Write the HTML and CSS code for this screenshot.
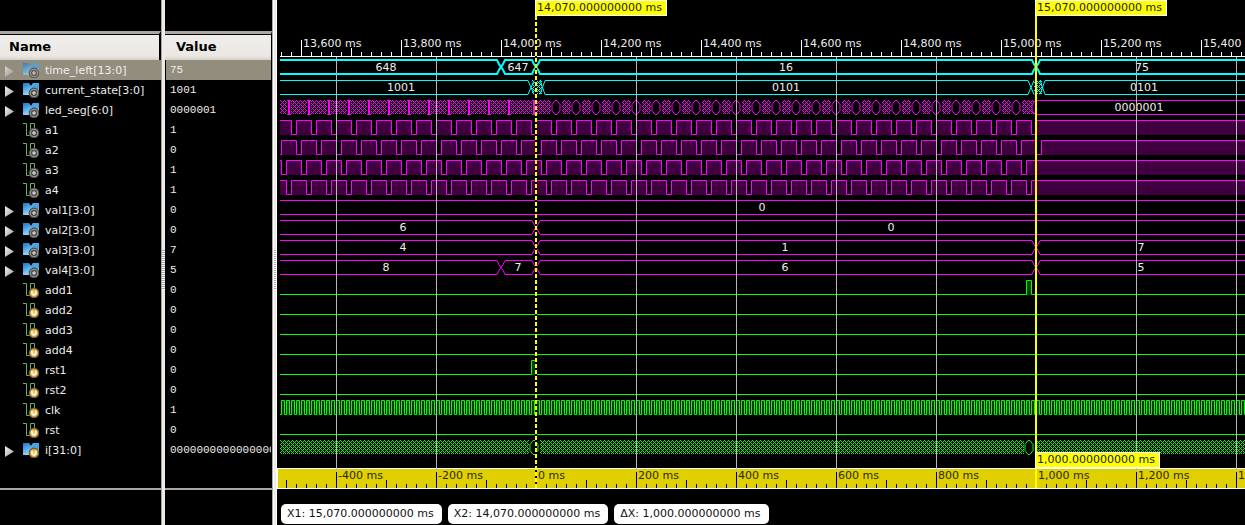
FILE: index.html
```html
<!DOCTYPE html>
<html lang="en">
<head>
<meta charset="utf-8">
<title>Waveform viewer</title>
<link rel="stylesheet" href="styles.css">
</head>
<body>
<svg class="defs" width="0" height="0" aria-hidden="true">
  <defs>
    <linearGradient id="blue" x1="0" y1="0" x2=".6" y2="1">
      <stop offset="0" stop-color="#1d76bd"/><stop offset=".5" stop-color="#5bb2ee"/><stop offset="1" stop-color="#c4e4f8"/>
    </linearGradient>
    <linearGradient id="arrow" x1="0" y1="0" x2="1" y2="1">
      <stop offset="0" stop-color="#f4f2f0"/><stop offset="1" stop-color="#a09c98"/>
    </linearGradient>
    <radialGradient id="gold"><stop offset="0" stop-color="#f6d77a"/><stop offset="1" stop-color="#d9991a"/></radialGradient>
    <symbol id="probe" viewBox="0 0 16 16">
      <circle cx="11" cy="11" r="5.4" fill="#4a4845"/>
      <circle cx="11" cy="11" r="3.8" fill="#4c4c4c" stroke="#a19e9a"/>
      <path d="M11 9v4M9 11h4" stroke="#eee"/>
    </symbol>
    <symbol id="unit" viewBox="0 0 16 16">
      <circle cx="11" cy="11" r="5.4" fill="#5d5748"/>
      <circle cx="11" cy="11" r="4.3" fill="url(#gold)"/>
      <path d="M9 8.500v2.500a2 2 0 0 0 4 0v-2.500" fill="none" stroke="#fff" stroke-width="1.400"/>
    </symbol>
    <symbol id="bus" viewBox="0 0 16 16">
      <path d="M0 1h6l2 3 2-3h6v12H10l-2-2-2 2H0z" fill="url(#blue)"/>
      <path d="M10 1h6v6l-6 1-2-4z" fill="#4ba3e3"/>
    </symbol>
    <symbol id="bit" viewBox="0 0 16 16">
      <path d="M0 1.500h3.500v12h4v-12h4v7" fill="none" stroke="#6fae5c"/>
    </symbol>
  </defs>
</svg>
<main class="viewer">
  <section class="pane names">
    <h2 class="head">Name</h2>
    <ul class="rows" id="names"></ul>
  </section>
  <div class="splitter narrow" role="separator"></div>
  <section class="pane values">
    <h2 class="head">Value</h2>
    <ul class="rows" id="values"></ul>
  </section>
  <div class="splitter wide" role="separator"></div>
  <section class="waves">
    <svg class="plot" id="plot" role="img" aria-label="Signal waveforms"></svg>
    <footer class="readouts">
      <span class="chip">X1: 15,070.000000000 ms</span>
      <span class="chip">X2: 14,070.000000000 ms</span>
      <span class="chip">ΔX: 1,000.000000000 ms</span>
    </footer>
  </section>
</main>
<script src="waves.js"></script>
</body>
</html>
```

FILE: styles.css
```css
* { box-sizing: border-box; }
body {
  margin: 0;
  background: #000;
  color: #eee;
  font-family: "DejaVu Sans", sans-serif;
  font-size: 11px;
}
.defs { position: absolute; }
.viewer { display: flex; min-height: 100vh; overflow: hidden; }
.pane { flex: none; padding-top: 31px; overflow: hidden; }
.names { width: 161px; }
.values { width: 107px; }
.head {
  margin: 0;
  height: 29px;
  padding: 2px 9px 0;
  border-top: 3px solid #aca6a3;
  background: linear-gradient(#f0eeeb, #ebe8e4 85%, #d5d1c9);
  box-shadow: inset 0 1px #000;
  color: #000;
  font-size: 13px;
  line-height: 22px;
  border-right: 2px solid #000;
}
.values .head { padding-left: 11px; border-right-width: 1px; }
.rows {
  list-style: none;
  margin: 0;
  padding: 0;
  height: 430px;
  border-bottom: 2px solid #aca6a3;
}
.row { display: flex; align-items: center; height: 20px; line-height: 20px; white-space: nowrap; }
.selected { background: #928d7d; }
.names .row { padding-left: 5px; }
.name { padding-top: 1px; }
.toggle { width: 18px; height: 20px; flex: none; padding: 0; border: 0; background: none; }
.toggle svg { display: block; width: 10px; height: 20px; }
.icon { width: 16px; height: 16px; margin-right: 6px; flex: none; }
.selected .icon, .selected .toggle { opacity: .7; }
.values .rows { padding: 0 1px; }
.values .row { padding: 0 0 0 4px; overflow: hidden; font-family: "Liberation Mono", monospace; }
.splitter {
  flex: none;
  background:
    repeating-linear-gradient(#aca6a3 0 1px, #fff 1px 2px) center 250px / 3px 40px no-repeat,
    #edeae7;
  border-left: 1px solid #aca6a3;
}
.narrow { width: 4px; }
.wide { width: 5px; box-shadow: inset 1px 0 #fff; border-right: 1px solid #fff; }
.waves { flex: 1; min-width: 0; }
.plot { display: block; width: 100%; height: 490px; overflow: hidden; }
.plot text { font-size: 11px; fill: #eee; }
.plot .gold-text { fill: #2b2700; }
.plot .flag-text { fill: #222; }
.readouts { display: flex; gap: 6px; padding: 14px 4px 1px; }
.chip {
  padding: 0 8px 0 6px;
  border-radius: 5px;
  background: #fff;
  color: #111;
  line-height: 20px;
  white-space: nowrap;
}
```

FILE: waves.js
```js
const signals = [
  ["time_left[13:0]", "75"], ["current_state[3:0]", "1001"], ["led_seg[6:0]", "0000001"],
  ["a1", "1"], ["a2", "0"], ["a3", "1"], ["a4", "1"],
  ["val1[3:0]", "0"], ["val2[3:0]", "0"], ["val3[3:0]", "7"], ["val4[3:0]", "5"],
  ["add1", "0"], ["add2", "0"], ["add3", "0"], ["add4", "0"],
  ["rst1", "0"], ["rst2", "0"], ["clk", "1"], ["rst", "0"],
  ["i[31:0]", "0000000000000000"]
];

signals.forEach(([name, value], i) => {
  const bus = name.includes("[");
  const badge = i > 10 ? "unit" : "probe";
  const sel = i === 0 ? " selected" : "";
  const arrow = '<svg viewBox="0 0 10 20"><path d="M0 6v11L9 11.5z" fill="url(#arrow)"/></svg>';
  const toggle = bus
    ? `<button class="toggle" aria-label="Expand ${name}">${arrow}</button>`
    : '<span class="toggle"></span>';
  document.getElementById("names").insertAdjacentHTML("beforeend",
    `<li class="row${sel}">${toggle}<svg class="icon"><use href="#${bus ? "bus" : "bit"}"/><use href="#${badge}"/></svg><span class="name">${name}</span></li>`);
  document.getElementById("values").insertAdjacentHTML("beforeend",
    `<li class="row${sel}">${value}</li>`);
});

// Plot coordinates: time axis runs 100px per 200ms, START is the left edge of the traces.
const START = 280, END = 4000, X2 = 536, X1 = 1036;
const CYAN = "#00ffff", PINK = "#ff00ff", GREEN = "#00ff00";
const out = [];
const rowTop = (row) => 60 + row * 20;
const rect = (x, y, w, h, fill) => out.push(`<rect x="${x}" y="${y}" width="${w}" height="${h}" fill="${fill}"/>`);
const path = (d, stroke, width = 1, fill = "none") => out.push(`<path d="${d}" stroke="${stroke}" stroke-width="${width}" fill="${fill}"/>`);
const label = (x, y, s, cls = "", anchor = "start") => out.push(`<text x="${x}" y="${y}" class="${cls}" text-anchor="${anchor}">${s}</text>`);

function busTrace(row, color, edges, texts, width = 1) {
  const off = width === 1 ? 0.5 : 0;
  const a = rowTop(row) + off, b = rowTop(row) + 14 + off;
  let up = `M${START} ${a}`, down = `M${START} ${b}`, flip = false;
  edges.forEach((x) => {
    const [u, v] = flip ? [b, a] : [a, b];
    up += `L${x - 4} ${u}L${x - 2} ${u + (v - u) * 0.3}L${x + 2} ${u + (v - u) * 0.7}L${x + 4} ${v}`;
    down += `L${x - 4} ${v}L${x - 2} ${v + (u - v) * 0.3}L${x + 2} ${v + (u - v) * 0.7}L${x + 4} ${u}`;
    flip = !flip;
  });
  path(`${up}H${END}`, color, width);
  path(`${down}H${END}`, color, width);
  texts.forEach(([x, s]) => label(x, rowTop(row) + 11, s, "", "middle"));
}

function pulses(row, color, fill, spans) {
  const y = rowTop(row);
  let d = "", x = START;
  spans.forEach(([from, to]) => {
    if (to > from) {
      rect(from, y + 1, to - from, 14, fill);
      if (from > START) d += `M${x} ${y + 14.5}H${from + 0.5}V${y + 0.5}`;
      else d += `M${START} ${y + 0.5}`;
      d += `H${to + 0.5}V${y + 14.5}`;
      x = to + 0.5;
    }
  });
  if (x < END) d += `M${x} ${y + 14.5}H${END}`;
  path(d, color);
}

const hatch = (id, color) =>
  `<pattern id="${id}" width="4" height="4" patternUnits="userSpaceOnUse"><path d="M0 0h1v1H0zM1 1h1v1H1zM2 2h1v1H2zM3 3h1v1H3zM3 1h1v1H3zM1 3h1v1H1z" fill="${color}"/></pattern>`;
out.push(`<defs>${hatch("hc", CYAN)}${hatch("hp", PINK)}${hatch("hg", GREEN)}</defs>`);

// upper ruler
rect(START, 56, END, 1, "#fff");
for (let x = 281, i = -2; x < 2500; x += 10, i++) {
  const h = i % 10 === 0 ? 16 : i % 5 === 0 ? 8 : 4;
  rect(x, 56 - h, 1, h, "#fff");
  if (h === 16) label(x + 2, 47, `${(13600 + i * 20).toLocaleString("en-US")} ms`);
}

busTrace(0, CYAN, [501, X2, X1], [[386, "648"], [518, "647"], [786, "16"], [1142, "75"]], 2);

// current_state changes with unsettled spans around both cursors
const y1 = rowTop(1) + 0.5, y2 = rowTop(1) + 14.5;
path(`M${START} ${y1}H528L534 ${y2}M${START} ${y2}H528L534 ${y1}M540 ${y1}L545 ${y2}H1028L1034 ${y1}M540 ${y2}L545 ${y1}H1028L1034 ${y2}M1040 ${y1}L1045 ${y2}H${END}M1040 ${y2}L1045 ${y1}H${END}`, CYAN);
rect(532, 80, 10, 14, "url(#hc)");
rect(1034, 80, 8, 14, "url(#hc)");
[[401, "1001"], [786, "0101"], [1144, "0101"]].forEach(([x, s]) => label(x, 91, s, "", "middle"));

// led_seg
rect(START, 100, X1 - START - 2, 14, "url(#hp)");
for (let x = 289; x < X2; x += 20) {
  const c = x > 520 ? 534 : x;
  rect(c - 2, 100, 4, 15, "#000");
  path(`M${c - 2} 100.5h4M${c - 2} 114.5h4`, PINK);
  rect(c - 1, 101, 2, 13, PINK);
}
for (let x = 556; x < X1; x += 20) {
  rect(x - 5, 100, 11, 14, "#000");
  path(`M${x - 1} 100.5h2l3 4v6l-3 4h-2l-3-4v-6z`, PINK);
}
path(`M${END} 100.5H1035L1032 105V110L1035 114.5H${END}`, PINK, 1, "#000");
label(1139, 111, "0000001", "", "middle");

// digit enables: low for 5px in every 20px
[[3, 291, 1031], [4, 296, 1036], [5, 281, 1021], [6, 286, 1026]].forEach(([row, first, last]) => {
  const spans = [];
  let x = row === 4 ? 281 : START;
  for (let low = first; low <= last; low += 20) { spans.push([x, low]); x = low + 5; }
  spans.push([x, END]);
  pulses(row, PINK, "#400040", spans);
});

busTrace(7, PINK, [], [[762, "0"]]);
busTrace(8, PINK, [X2], [[403, "6"], [891, "0"]]);
busTrace(9, PINK, [X2, X1], [[403, "4"], [785, "1"], [1141, "7"]]);
busTrace(10, PINK, [501, X2, X1], [[386, "8"], [518, "7"], [785, "6"], [1141, "5"]]);

pulses(11, GREEN, "#004000", [[1026, 1031]]);
[12, 13, 14, 16, 18].forEach((row) => pulses(row, GREEN, "#004000", []));
pulses(15, GREEN, "#004000", [[531, 536]]);
const clock = [];
for (let x = 281; x < 2500; x += 5) clock.push([x, x + 3]);
pulses(17, GREEN, "#004000", clock);

rect(START, 440, END, 14, "url(#hg)");
[534, 1029].forEach((x) => {
  rect(x - 5, 440, 11, 14, "#000");
  path(`M${x - 1} 440.5h2l3 4v6l-3 4h-2l-3-4v-6z`, GREEN);
});

// lower ruler, relative to the X2 cursor
rect(277, 468, END, 21, "#fff");
rect(278, 469, END, 19, "#e0d000");
for (let x = 286, i = -25; x < 2500; x += 10, i++) {
  const h = i % 10 === 0 ? 16 : i % 5 === 0 ? 8 : 4;
  rect(x, 488 - h, 1, h, "#000");
  if (h === 16) label(x + 2, 479, `${(i * 20).toLocaleString("en-US")} ms`, "gold-text");
}

for (let x = 336; x < 2500; x += 100) rect(x, 57, 1, 415, "#b8b8b8");

// cursors and their flags
rect(X1 - 1, 16, 2, 472, "#ff0");
path(`M${X2} 16V488`, "#000", 2);
out.push(`<path d="M${X2} 16V488" stroke="#ff0" stroke-width="2" stroke-dasharray="4 2"/>`);
function flag(x, y, w, text) {
  rect(x - 1, y, w, 16, "#fff");
  rect(x, y + 1, w - 2, 14, "#ff0");
  label(x + 1, y + 11, text, "flag-text");
}
flag(X2, 0, 132, "14,070.000000000 ms");
flag(X1, 0, 132, "15,070.000000000 ms");
flag(X1, 452, 125, "1,000.000000000 ms");

document.getElementById("plot").innerHTML = `<g transform="translate(-277 0)">${out.join("")}</g>`;
```
